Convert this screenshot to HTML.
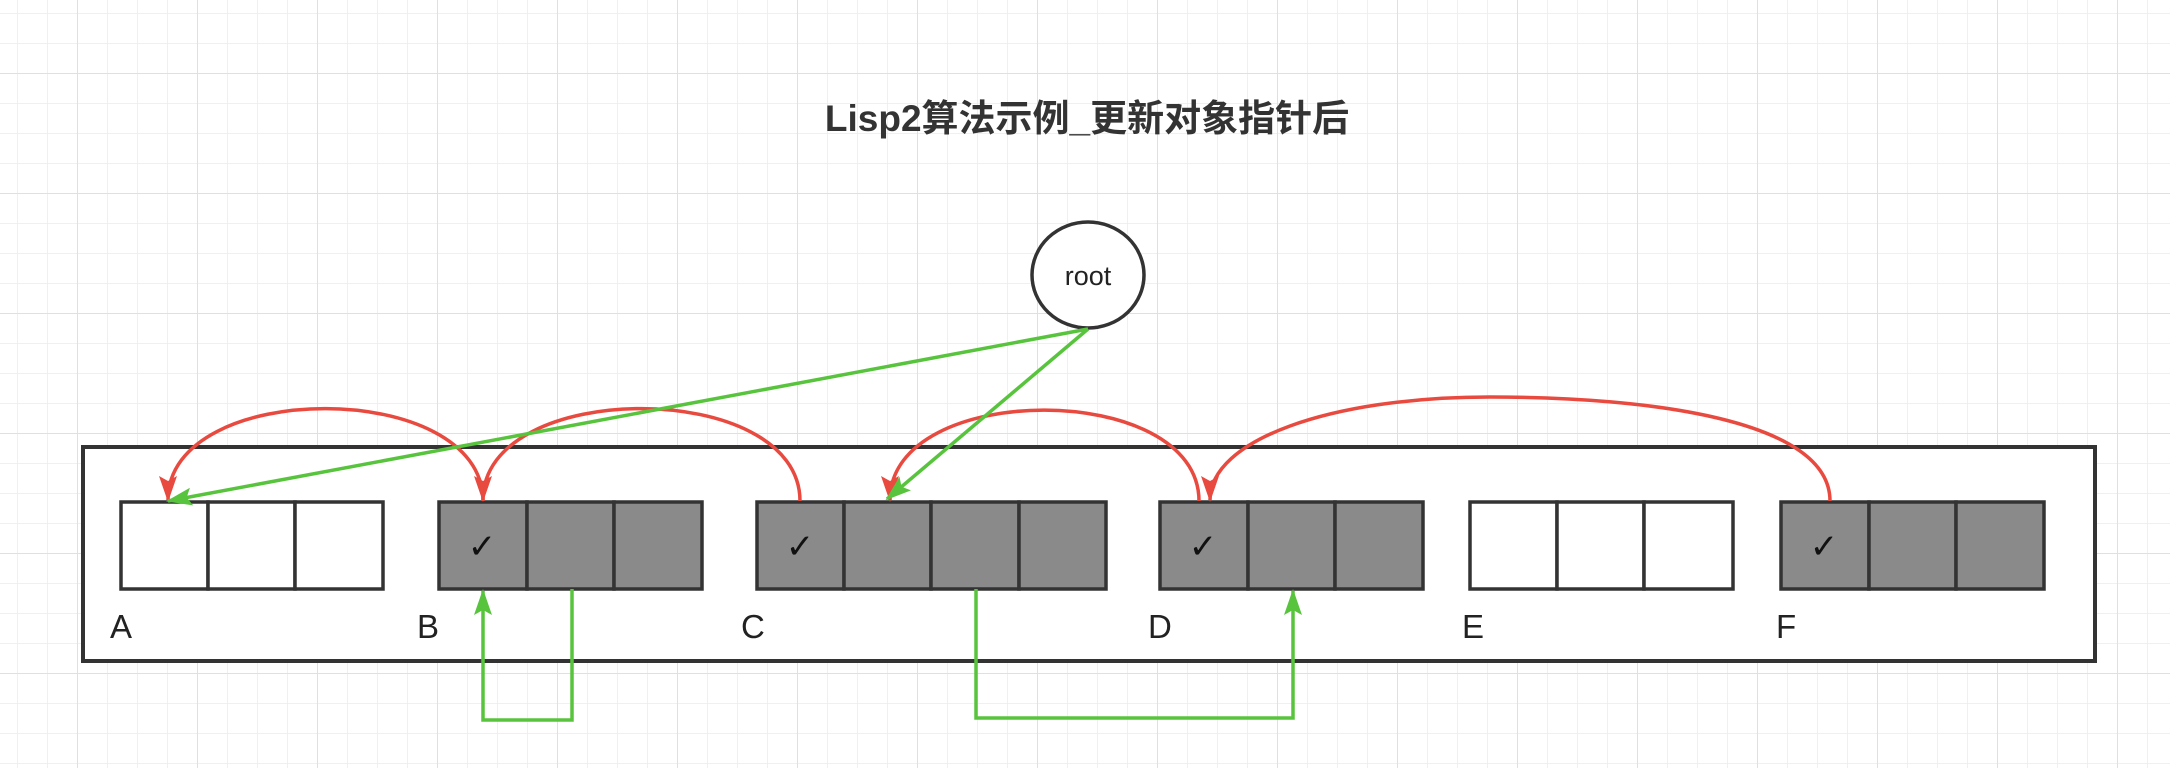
<!DOCTYPE html>
<html><head><meta charset="utf-8"><style>
html,body{margin:0;padding:0;background:#fff;}
svg{display:block;}
</style></head><body>
<svg width="2170" height="768" viewBox="0 0 2170 768" xmlns="http://www.w3.org/2000/svg">
<defs>
<pattern id="minor" x="17" y="13" width="30" height="30" patternUnits="userSpaceOnUse">
<path d="M0 0V30M0 0H30" stroke="#ececef" stroke-width="1.5" fill="none"/>
</pattern>
<pattern id="major" x="77" y="73" width="120" height="120" patternUnits="userSpaceOnUse">
<path d="M0 0V120M0 0H120" stroke="#dfe0e4" stroke-width="2" fill="none"/>
</pattern>
<marker id="ar" viewBox="0 0 26 18" refX="24" refY="9" markerWidth="26" markerHeight="18" orient="auto" markerUnits="userSpaceOnUse">
<path d="M0 0L26 9L0 18L5 9Z" fill="#e84a3f"/>
</marker>
<marker id="ag" viewBox="0 0 26 18" refX="24" refY="9" markerWidth="26" markerHeight="18" orient="auto" markerUnits="userSpaceOnUse">
<path d="M0 0L26 9L0 18L5 9Z" fill="#58c43d"/>
</marker>
</defs>
<rect width="2170" height="768" fill="url(#minor)"/>
<rect width="2170" height="768" fill="url(#major)"/>

<text x="1087" y="131" text-anchor="middle" font-family="'Liberation Sans','Noto Sans CJK SC',sans-serif" font-size="37" fill="#333" font-weight="bold">Lisp2算法示例_更新对象指针后</text>

<ellipse cx="1088" cy="275" rx="56" ry="53" fill="#fff" stroke="#333" stroke-width="3.5"/>
<text x="1088" y="285" text-anchor="middle" font-family="'Liberation Sans',sans-serif" font-size="27" fill="#222">root</text>

<rect x="83" y="447" width="2012" height="214" fill="#fff" stroke="#333" stroke-width="4"/>

<g stroke="#333" stroke-width="3.5">
<rect x="121" y="502" width="87" height="87" fill="#fff"/>
<rect x="208" y="502" width="87" height="87" fill="#fff"/>
<rect x="295" y="502" width="88" height="87" fill="#fff"/>

<rect x="439" y="502" width="88" height="87" fill="#8a8a8a"/>
<rect x="527" y="502" width="87" height="87" fill="#8a8a8a"/>
<rect x="614" y="502" width="88" height="87" fill="#8a8a8a"/>

<rect x="757" y="502" width="87" height="87" fill="#8a8a8a"/>
<rect x="844" y="502" width="87" height="87" fill="#8a8a8a"/>
<rect x="931" y="502" width="88" height="87" fill="#8a8a8a"/>
<rect x="1019" y="502" width="87" height="87" fill="#8a8a8a"/>

<rect x="1160" y="502" width="88" height="87" fill="#8a8a8a"/>
<rect x="1248" y="502" width="87" height="87" fill="#8a8a8a"/>
<rect x="1335" y="502" width="88" height="87" fill="#8a8a8a"/>

<rect x="1470" y="502" width="87" height="87" fill="#fff"/>
<rect x="1557" y="502" width="87" height="87" fill="#fff"/>
<rect x="1644" y="502" width="89" height="87" fill="#fff"/>

<rect x="1781" y="502" width="88" height="87" fill="#8a8a8a"/>
<rect x="1869" y="502" width="87" height="87" fill="#8a8a8a"/>
<rect x="1956" y="502" width="88" height="87" fill="#8a8a8a"/>
</g>

<g font-family="'DejaVu Sans',sans-serif" font-size="34" font-weight="bold" fill="#111" text-anchor="middle">
<text x="482" y="558">✓</text>
<text x="800" y="558">✓</text>
<text x="1203" y="558">✓</text>
<text x="1824" y="558">✓</text>
</g>

<g font-family="'Liberation Sans',sans-serif" font-size="33" fill="#222">
<text x="110" y="638">A</text>
<text x="417" y="638">B</text>
<text x="741" y="638">C</text>
<text x="1148" y="638">D</text>
<text x="1462" y="638">E</text>
<text x="1776" y="638">F</text>
</g>

<g fill="none" stroke="#e84a3f" stroke-width="3.5" marker-end="url(#ar)">
<path d="M483 501 C483 378 168 378 168 500"/>
<path d="M800 501 C800 378 483 378 483 500"/>
<path d="M1199 501 C1199 380 890 380 890 500"/>
<path d="M1830 501 C1830 420 1650 397 1490 397 C1330 397 1210 440 1210 500"/>
</g>

<g fill="none" stroke="#58c43d" stroke-width="3.5">
<path d="M1088 329 L168 501" marker-end="url(#ag)"/>
<path d="M1088 329 L887 499" marker-end="url(#ag)"/>
<path d="M572 589 V720 H483 V591" marker-end="url(#ag)"/>
<path d="M976 589 V718 H1293 V591" marker-end="url(#ag)"/>
</g>
</svg>
</body></html>
